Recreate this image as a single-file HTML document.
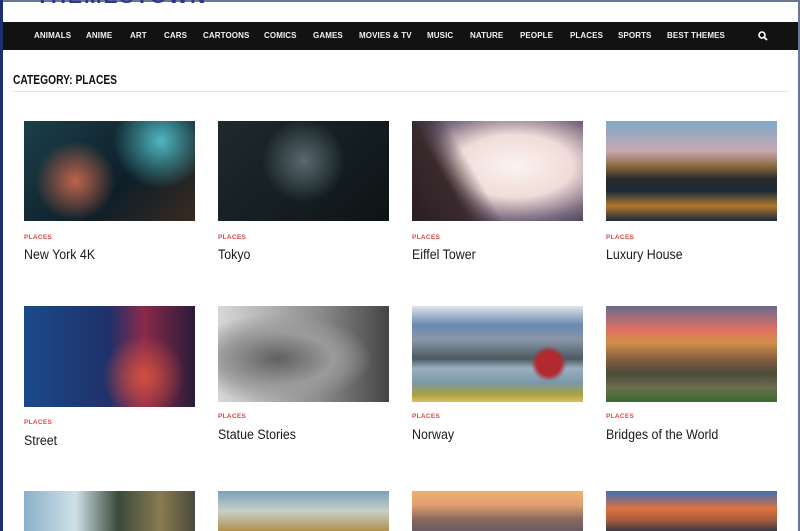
<!DOCTYPE html>
<html><head><style>
*{margin:0;padding:0;box-sizing:border-box}
body{width:800px;height:531px;overflow:hidden;background:#fff;font-family:"Liberation Sans",sans-serif;position:relative}
.lb{position:absolute;left:0;top:0;width:3px;height:531px;background:#1d2f73}
.rb{position:absolute;right:0;top:0;width:2px;height:531px;background:#6a7694}
.tb{position:absolute;left:0;top:0;width:800px;height:2px;background:#6a7694}
.logo{position:absolute;left:36px;top:-15px;font:bold 21px "Liberation Sans",sans-serif;color:#2b3a8f;letter-spacing:2px}
.nav{position:absolute;left:3px;top:22px;width:795px;height:28px;background:#121212}
.nav span{position:absolute;top:9px;color:#f2f2f2;font:bold 8px "Liberation Sans",sans-serif;letter-spacing:.1px}
h1{position:absolute;left:13px;top:73px;font:bold 12.5px "Liberation Sans",sans-serif;color:#111;transform:scaleX(.82);transform-origin:left}
.hr{position:absolute;left:13px;top:91px;width:776px;height:1px;background:#e6e6e6}
.img{position:absolute;width:171px}
.cat{position:absolute;font:bold 6.5px "Liberation Sans",sans-serif;color:#e04646;letter-spacing:.3px}
.t{position:absolute;font:13.5px "Liberation Sans",sans-serif;color:#1a1a1a;transform:scaleX(.92);transform-origin:left}
</style></head><body>
<div class="tb"></div>
<div class="logo">THEMESTOWN</div>
<div class="nav">
<span style="left:31px">ANIMALS</span><span style="left:83px">ANIME</span><span style="left:127px">ART</span><span style="left:161px">CARS</span><span style="left:200px">CARTOONS</span><span style="left:261px">COMICS</span><span style="left:310px">GAMES</span><span style="left:356px">MOVIES &amp; TV</span><span style="left:424px">MUSIC</span><span style="left:467px">NATURE</span><span style="left:517px">PEOPLE</span><span style="left:567px">PLACES</span><span style="left:615px">SPORTS</span><span style="left:664px">BEST THEMES</span>
<svg style="position:absolute;left:755px;top:9px" width="10" height="10" viewBox="0 0 10 10"><circle cx="4" cy="4" r="3" fill="none" stroke="#fff" stroke-width="1.6"/><path d="M6.2 6.2L9 9" stroke="#fff" stroke-width="1.8"/></svg>
</div>
<h1>CATEGORY: PLACES</h1>
<div class="hr"></div>

<div class="img" style="left:24px;top:121px;height:100px;background:radial-gradient(circle at 30% 60%,#c0644a 0,transparent 30%),radial-gradient(circle at 80% 20%,#4fb8c0 0,transparent 30%),linear-gradient(135deg,#1b3f4a,#0e1e28 60%,#3a2a20)"></div>
<div class="img" style="left:218px;top:121px;height:100px;background:radial-gradient(circle at 50% 40%,#5a6a70 0,transparent 40%),linear-gradient(135deg,#1e2a2e,#0d1416)"></div>
<div class="img" style="left:412px;top:121px;height:100px;background:linear-gradient(60deg,#2a1e22 0,#3a2a2e 25%,transparent 40%),radial-gradient(ellipse at 60% 45%,#fbf3f0 0,#f0dcd8 40%,#7a6a80 70%,#1a2a40 100%)"></div>
<div class="img" style="left:606px;top:121px;height:100px;background:linear-gradient(180deg,#7fa8c8 0,#c7a8b0 30%,#8a6a40 45%,#2a2a2a 58%,#1a2a38 70%,#b07830 85%,#1a2a3a 100%)"></div>

<div class="cat" style="left:24px;top:234px">PLACES</div><div class="t" style="left:24px;top:247px">New York 4K</div>
<div class="cat" style="left:218px;top:234px">PLACES</div><div class="t" style="left:218px;top:247px">Tokyo</div>
<div class="cat" style="left:412px;top:234px">PLACES</div><div class="t" style="left:412px;top:247px">Eiffel Tower</div>
<div class="cat" style="left:606px;top:234px">PLACES</div><div class="t" style="left:606px;top:247px">Luxury House</div>

<div class="img" style="left:24px;top:306px;height:101px;background:radial-gradient(circle at 70% 70%,#d05040 0,transparent 30%),linear-gradient(90deg,#1a4a8a,#20306a 50%,#8a2a4a 70%,#2a1a3a)"></div>
<div class="img" style="left:218px;top:306px;height:96px;background:radial-gradient(ellipse at 35% 55%,#606060 0,#9a9a9a 35%,transparent 60%),linear-gradient(90deg,#d8d8d8,#8a8a8a 60%,#444)"></div>
<div class="img" style="left:412px;top:306px;height:96px;background:radial-gradient(circle at 80% 60%,#b02a30 0,#b02a30 8%,transparent 12%),linear-gradient(180deg,#e0e4ea 0,#6a88b0 20%,#8a96a8 35%,#4a5a60 55%,#9ab0c0 65%,#7a98a8 80%,#a8a040 92%,#d8c060 100%)"></div>
<div class="img" style="left:606px;top:306px;height:96px;background:linear-gradient(180deg,#6a6a90 0,#e07060 25%,#d0904a 38%,#8a6040 55%,#4a4a38 70%,#6a7050 85%,#3a6a30 100%)"></div>

<div class="cat" style="left:24px;top:419px">PLACES</div><div class="t" style="left:24px;top:433px">Street</div>
<div class="cat" style="left:218px;top:413px">PLACES</div><div class="t" style="left:218px;top:427px">Statue Stories</div>
<div class="cat" style="left:412px;top:413px">PLACES</div><div class="t" style="left:412px;top:427px">Norway</div>
<div class="cat" style="left:606px;top:413px">PLACES</div><div class="t" style="left:606px;top:427px">Bridges of the World</div>

<div class="img" style="left:24px;top:491px;height:40px;background:linear-gradient(90deg,#8ab0c8,#d0e0e8 30%,#3a4a3a 55%,#8a7a50 80%,#4a4a40)"></div>
<div class="img" style="left:218px;top:491px;height:40px;background:linear-gradient(180deg,#7aa0b8,#c8d0c8 50%,#b09050)"></div>
<div class="img" style="left:412px;top:491px;height:40px;background:linear-gradient(180deg,#f0b070,#e0a070 35%,#8a6a60 70%,#6a5a60)"></div>
<div class="img" style="left:606px;top:491px;height:40px;background:linear-gradient(180deg,#3a70b0,#e07040 45%,#a05a40 75%,#3a3a40)"></div>

<div class="lb"></div><div class="rb"></div>
</body></html>
